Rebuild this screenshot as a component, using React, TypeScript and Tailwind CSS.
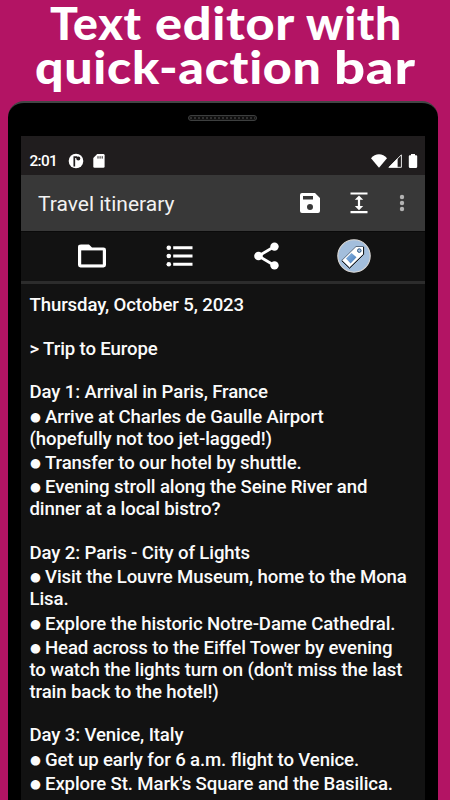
import React from "react";

type Line = { text: string; bullet?: boolean };

const lines: Line[] = [
  { text: "Thursday, October 5, 2023" },
  { text: "" },
  { text: "> Trip to Europe" },
  { text: "" },
  { text: "Day 1: Arrival in Paris, France" },
  { text: "Arrive at Charles de Gaulle Airport", bullet: true },
  { text: "(hopefully not too jet-lagged!)" },
  { text: "Transfer to our hotel by shuttle.", bullet: true },
  { text: "Evening stroll along the Seine River and", bullet: true },
  { text: "dinner at a local bistro?" },
  { text: "" },
  { text: "Day 2: Paris - City of Lights" },
  { text: "Visit the Louvre Museum, home to the Mona", bullet: true },
  { text: "Lisa." },
  { text: "Explore the historic Notre-Dame Cathedral.", bullet: true },
  { text: "Head across to the Eiffel Tower by evening", bullet: true },
  { text: "to watch the lights turn on (don't miss the last" },
  { text: "train back to the hotel!)" },
  { text: "" },
  { text: "Day 3: Venice, Italy" },
  { text: "Get up early for 6 a.m. flight to Venice.", bullet: true },
  { text: "Explore St. Mark's Square and the Basilica.", bullet: true },
];

function Headline() {
  return (
    <h1 className="h-[101px] shrink-0 pt-[1px] font-['Lato',sans-serif] text-[45px] leading-[44px] font-black tracking-[0.6px] whitespace-nowrap text-white">
      <span className="flex pl-[50px]">
        <span className="w-[105px] origin-left scale-x-[1.03]">Text</span>
        <span className="w-[151px] origin-left scale-x-[1.12]">editor</span>
        <span className="w-[94px] origin-left scale-x-[1.03]">with</span>
      </span>
      <span className="flex pl-[35px]">
        <span className="w-[299px] origin-left scale-x-[1.113]">quick-action</span>
        <span className="w-[84px] origin-left scale-x-[1.21]">bar</span>
      </span>
    </h1>
  );
}

function StatusBar() {
  return (
    <div className="flex h-[39px] shrink-0 items-end bg-[#201d1e] pr-[7px] pb-[4px] pl-[8.5px] text-white">
      <span className="w-[38.5px] text-[15.4px] leading-[19px] font-medium tracking-[-0.7px]">2:01</span>
      <svg className="mb-[2px] h-[16px] w-[16px]" viewBox="0 0 16 16">
        <circle cx="8" cy="8" r="7.3" fill="#fff" />
        <path d="M6.3 3.3V13.5M6.3 4.1H9.2" fill="none" stroke="#201d1e" strokeWidth="1.7" />
        <circle cx="10.3" cy="5.6" r="2" fill="#201d1e" />
      </svg>
      <svg className="mb-[3px] ml-[9px] h-[14px] w-[12px]" viewBox="0 0 12 14">
        <path d="M4.2 0H10.3Q11.6 0 11.6 1.3V12.5Q11.6 13.8 10.3 13.8H1.6Q.3 13.8 .3 12.5V4Z" fill="#fff" />
        <path d="M5 2.2V4.6M7.1 2.2V4.6M9.2 2.2V4.6" stroke="#201d1e" strokeWidth="1" />
      </svg>
      <div className="ml-auto flex items-end pb-[3px]">
        <svg className="mr-[1px] h-[14px] w-[16px]" viewBox="0 0 16 14">
          <path d="M0 4.2C2.2 1.6 5 .2 8 .2S13.8 1.6 16 4.2L8 13.8Z" fill="#fff" />
        </svg>
        <svg className="h-[14px] w-[14px]" viewBox="0 0 14 14">
          <path d="M13.4.8V13.3H.9Z" fill="#201d1e" stroke="#e8e8e8" strokeWidth="1" />
          <path d="M9.6 4.2V13.5H.6Z" fill="#fff" />
        </svg>
        <svg className="ml-[6px] h-[14px] w-[10px]" viewBox="0 0 10 14">
          <path d="M3 0H7V1.3H8.2Q9.2 1.3 9.2 2.3V12.8Q9.2 13.9 8.2 13.9H1.8Q.8 13.9 .8 12.8V2.3Q.8 1.3 1.8 1.3H3Z" fill="#fff" />
        </svg>
      </div>
    </div>
  );
}

function TitleBar() {
  return (
    <div className="flex h-[57px] shrink-0 items-center border-b border-[#0a0a0a] bg-[#383838] pl-[17px]">
      <span className="w-[261.5px] pt-[2px] text-[21px] leading-[28px] text-[#f2f2f2]">Travel itinerary</span>
      <svg className="h-[20px] w-[20px]" viewBox="0 0 20 20">
        <path fillRule="evenodd" fill="#fff" d="M2 0H15L20 5V18Q20 20 18 20H2Q0 20 0 18V2Q0 0 2 0ZM3 3V6.6H13V3ZM10 11A3 3 0 1 0 10 17A3 3 0 1 0 10 11Z" />
      </svg>
      <svg className="ml-[30.5px] h-[22px] w-[18px]" viewBox="0 0 18 22">
        <path d="M.5 1.5H17.5M.5 20.2H17.5" stroke="#fff" strokeWidth="2.2" />
        <path d="M9 3.5L13.2 7.8H10.1V13.9H13.2L9 18.2L4.8 13.9H7.9V7.8H4.8Z" fill="#fff" />
      </svg>
      <svg className="ml-[31px] h-[18px] w-[6px]" viewBox="0 0 6 18">
        <circle cx="3" cy="3" r="2.2" fill="#b3b3b3" />
        <circle cx="3" cy="9" r="2.2" fill="#b3b3b3" />
        <circle cx="3" cy="15" r="2.2" fill="#b3b3b3" />
      </svg>
    </div>
  );
}

function ActionBar() {
  return (
    <div className="flex h-[52px] shrink-0 items-center border-b-[3px] border-[#2c2c2c] bg-[#121212] pb-[1px] pl-[57px]">
      <svg className="h-[24px] w-[28px]" viewBox="0 0 28 24">
        <path d="M3 .6H11L14 3.6H25.5Q28 3.6 28 6V21Q28 23.4 25.5 23.4H2.5Q0 23.4 0 21V3Q0 .6 3 .6Z" fill="#fff" />
        <path d="M3.2 6.4H24.8V20.4H3.2Z" fill="#121212" />
      </svg>
      <svg className="ml-[60px] h-[22px] w-[27px]" viewBox="0 0 27 22">
        <path d="M7.2 2.7H26.5M7.2 11H26.5M7.2 19.3H26.5" stroke="#fff" strokeWidth="2.9" />
        <circle cx="2.8" cy="2.7" r="2.3" fill="#fff" />
        <circle cx="2.8" cy="11" r="2.3" fill="#fff" />
        <circle cx="2.8" cy="19.3" r="2.3" fill="#fff" />
      </svg>
      <svg className="ml-[61px] h-[28px] w-[26px]" viewBox="0 0 26 28">
        <path d="M20.5 4.5L4.5 14L20.5 23.5" fill="none" stroke="#fff" strokeWidth="2.8" />
        <circle cx="20.5" cy="4.6" r="4.2" fill="#fff" />
        <circle cx="4.5" cy="14" r="4.3" fill="#fff" />
        <circle cx="20.5" cy="23.4" r="4.2" fill="#fff" />
      </svg>
      <svg className="ml-[57px] h-[34px] w-[34px]" viewBox="0 0 34 34">
        <defs>
          <linearGradient id="tagFill" x1="0" y1="0" x2="1" y2="1">
            <stop offset="0" stopColor="#8db9e6" />
            <stop offset="1" stopColor="#4479b8" />
          </linearGradient>
        </defs>
        <circle cx="17" cy="17" r="16.2" fill="#a3bedc" stroke="#d9d6d2" strokeWidth="1.1" />
        <path d="M19 7.5H26.5V15.2L12.5 29L4.8 21.4Z" fill="#fff" stroke="#5a6c80" strokeWidth="1" strokeLinejoin="round" />
        <path d="M26.6 8V15.5L12.5 29.2L4.8 21.8" fill="none" stroke="#111" strokeWidth="1" />
        <path d="M14.5 14L19.5 18.2L13.6 24.6L9 19.6Z" fill="url(#tagFill)" />
        <circle cx="22.3" cy="11.6" r="1.8" fill="#a3bedc" stroke="#24507e" strokeWidth="1" />
      </svg>
    </div>
  );
}

function Note() {
  return (
    <div className="flex-1 overflow-hidden bg-[#121212] pt-[11px] pl-[8.5px] text-[18.6px] font-medium tracking-[-0.12px] whitespace-pre text-[#fbfbfb]">
      {lines.map((line, i) =>
        line.bullet ? (
          <div key={i} className="flex h-[24.45px] pt-[2.6px] leading-[21.8px]">
            <span className="w-[15.5px] pl-[0.5px] font-['DejaVu_Sans',sans-serif] text-[12.5px] leading-[20px]">●</span>
            <span>{line.text}</span>
          </div>
        ) : (
          <div key={i} className="h-[21.84px] leading-[21.8px]">{line.text}</div>
        )
      )}
    </div>
  );
}

export default function App() {
  return (
    <main className="flex h-[800px] w-[450px] flex-col overflow-hidden bg-[#b31464] font-['Roboto',sans-serif]">
      <Headline />
      <section className="mr-[12px] ml-[8px] flex min-h-0 flex-1 flex-col rounded-t-[16px] border-t-2 border-[#434646] bg-black px-[13px]">
        <div className="flex h-[33px] shrink-0 justify-center pt-[12px]">
          <div className="mr-[1px] h-[6px] w-[69px] rounded-full border border-[#3d3f3f] bg-[#151515] p-[1px]">
            <div className="h-[2px] bg-[repeating-linear-gradient(90deg,#303030_0_2px,#0c0c0c_2px_4px)]" />
          </div>
        </div>
        <StatusBar />
        <TitleBar />
        <ActionBar />
        <Note />
      </section>
    </main>
  );
}
